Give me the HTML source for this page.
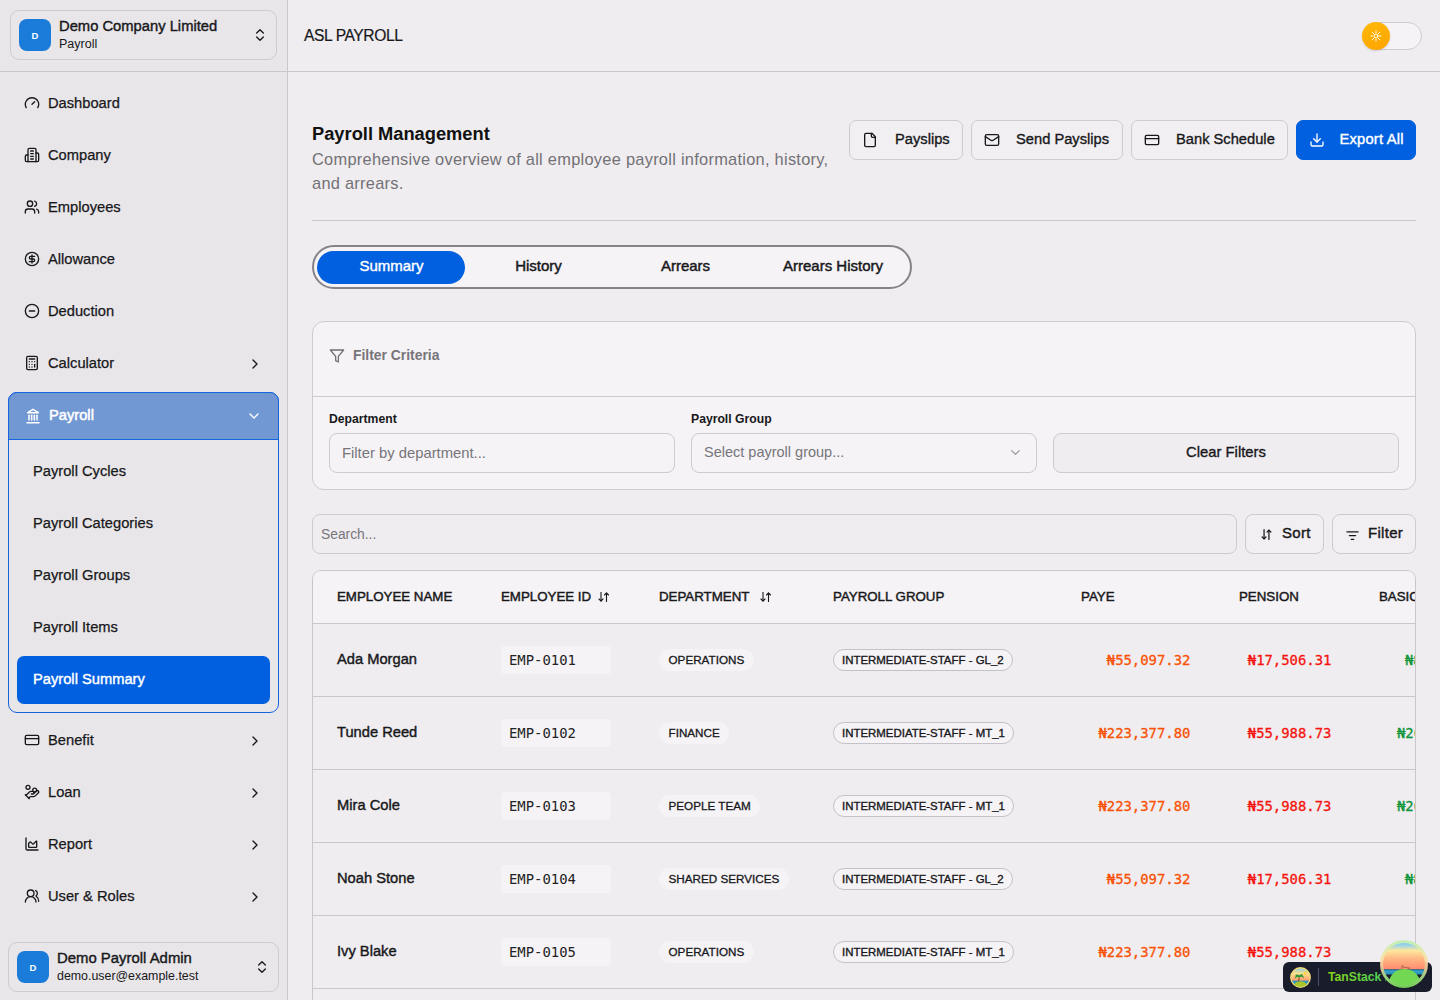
<!DOCTYPE html>
<html lang="en">
<head>
<meta charset="utf-8">
<title>ASL Payroll - Payroll Management</title>
<style>
*{box-sizing:border-box;margin:0;padding:0}
html,body{width:1440px;height:1000px;overflow:hidden}
body{font-family:"Liberation Sans",sans-serif;background:#efedf0;color:#18181b;position:relative;-webkit-font-smoothing:antialiased}
.abs{position:absolute}
svg{display:block}
.ico{position:absolute;fill:none;stroke:currentColor;stroke-width:2;stroke-linecap:round;stroke-linejoin:round}
/* sidebar */
#sidebar{position:absolute;left:0;top:0;width:288px;height:1000px;background:#e8e6e9;border-right:1px solid #c9c7cb}
#sbhead{position:absolute;left:0;top:0;width:287px;height:72px;border-bottom:1px solid #c9c7cb}
.switch{position:absolute;border:1px solid #cdcbcf;border-radius:9px;background:#e8e6e9}
.avatar{position:absolute;width:32px;height:32px;border-radius:8px;background:#1a7bd8;color:#fff;font-weight:700;font-size:9.5px;text-align:center;line-height:33px}
.nav{position:absolute;left:48px;font-size:14.7px;line-height:20px;color:#18181b;white-space:nowrap;-webkit-text-stroke:0.25px #18181b}
.sub{position:absolute;left:33px;font-size:14.7px;line-height:20px;color:#18181b;white-space:nowrap;-webkit-text-stroke:0.25px #18181b}
/* main */
#topbar{position:absolute;left:288px;top:0;width:1152px;height:72px;border-bottom:1px solid #c9c7cb}
.btn{position:absolute;top:120px;height:40px;border:1px solid #cdcbcf;border-radius:7px;background:#f1eff2;font-size:14.7px;line-height:36px;white-space:nowrap;color:#18181b;-webkit-text-stroke:0.35px #18181b}
.btn span{position:absolute;top:0}
.field{position:absolute;border:1px solid #cdcbcf;border-radius:8px;background:#f5f3f6;font-size:14.5px;color:#77757a;white-space:nowrap}
.tab{font-size:15px;line-height:20px;text-align:center;white-space:nowrap;-webkit-text-stroke:0.45px #18181b}
.lbl{font-size:12.2px;line-height:16px;font-weight:700;white-space:nowrap;color:#18181b}
.th{position:absolute;top:0;height:52px;line-height:51px;font-size:13.3px;color:#18181b;white-space:nowrap;-webkit-text-stroke:0.45px #18181b}
.row{position:absolute;left:0;width:1200px;height:73px;border-top:1px solid #c9c7cb}
.row>*{position:absolute;white-space:nowrap}
.name{left:24px;top:25px;font-size:14.7px;line-height:20px;-webkit-text-stroke:0.4px #18181b}
.eid{left:188px;top:22px;width:110px;height:28px;border-radius:4px;background:#f5f3f6;font-family:"DejaVu Sans Mono","Liberation Mono",monospace;font-size:13.9px;line-height:28px;padding-left:8px;color:#222}
.dept{left:346px;top:25px;height:22px;border-radius:11px;background:#f5f3f6;font-size:11.7px;line-height:22px;padding:0 9.5px;-webkit-text-stroke:0.3px #18181b}
.grp{left:520px;top:25px;height:22px;border-radius:11px;border:1px solid #c4c2c6;background:#f5f3f6;font-size:11.45px;line-height:20px;padding:0 8px;-webkit-text-stroke:0.35px #18181b}
.mono{font-family:"DejaVu Sans Mono","Liberation Mono",monospace;font-size:13.9px;line-height:20px;top:26px;text-align:right;-webkit-text-stroke:0.3px currentColor}
.paye{right:322.600px;color:#f95206}
.pen{right:181.600px;color:#f5140f}
.bas{color:#10963c}
</style>
</head>
<body>
<!-- SIDEBAR -->
<div id="sidebar">
  <div id="sbhead">
    <div class="switch" style="left:10px;top:10px;width:267px;height:50px"></div>
    <div class="avatar" style="left:19px;top:19px">D</div>
    <div class="abs" style="left:59px;top:17px;font-size:14.75px;line-height:18px;font-weight:400;white-space:nowrap;-webkit-text-stroke:0.4px #18181b">Demo Company Limited</div>
    <div class="abs" style="left:59px;top:36px;font-size:12.5px;line-height:16px;white-space:nowrap">Payroll</div>
    <svg class="ico" style="left:252px;top:27px" width="16" height="16" viewBox="0 0 24 24"><path d="m7 15 5 5 5-5"/><path d="m7 9 5-5 5 5"/></svg>
  </div>


  <!-- nav icons + labels -->
  <svg class="ico" style="left:24px;top:95px" width="16" height="16" viewBox="0 0 24 24"><path d="M3.3 19a10 10 0 1 1 17.4 0"/><path d="m12 14 4-4"/></svg>
  <div class="nav" style="top:93px">Dashboard</div>

  <svg class="ico" style="left:24px;top:147px" width="16" height="16" viewBox="0 0 24 24"><path d="M6 22V4a2 2 0 0 1 2-2h8a2 2 0 0 1 2 2v18Z"/><path d="M6 12H4a2 2 0 0 0-2 2v6a2 2 0 0 0 2 2h2"/><path d="M18 9h2a2 2 0 0 1 2 2v9a2 2 0 0 1-2 2h-2"/><path d="M10 6h4"/><path d="M10 10h4"/><path d="M10 14h4"/><path d="M10 18h4"/></svg>
  <div class="nav" style="top:145px">Company</div>

  <svg class="ico" style="left:24px;top:199px" width="16" height="16" viewBox="0 0 24 24"><path d="M16 21v-2a4 4 0 0 0-4-4H6a4 4 0 0 0-4 4v2"/><circle cx="9" cy="7" r="4"/><path d="M22 21v-2a4 4 0 0 0-3-3.87"/><path d="M16 3.13a4 4 0 0 1 0 7.75"/></svg>
  <div class="nav" style="top:197px">Employees</div>

  <svg class="ico" style="left:24px;top:251px" width="16" height="16" viewBox="0 0 24 24"><circle cx="12" cy="12" r="10"/><path d="M16 8h-6a2 2 0 1 0 0 4h4a2 2 0 1 1 0 4H8"/><path d="M12 18V6"/></svg>
  <div class="nav" style="top:249px">Allowance</div>

  <svg class="ico" style="left:24px;top:303px" width="16" height="16" viewBox="0 0 24 24"><circle cx="12" cy="12" r="10"/><path d="M8 12h8"/></svg>
  <div class="nav" style="top:301px">Deduction</div>

  <svg class="ico" style="left:24px;top:355px" width="16" height="16" viewBox="0 0 24 24"><rect width="16" height="20" x="4" y="2" rx="2"/><path d="M8 6h8"/><path d="M16 14v4"/><path d="M16 10h.01"/><path d="M12 10h.01"/><path d="M8 10h.01"/><path d="M12 14h.01"/><path d="M8 14h.01"/><path d="M12 18h.01"/><path d="M8 18h.01"/></svg>
  <div class="nav" style="top:353px">Calculator</div>
  <svg class="ico" style="left:247px;top:356px" width="16" height="16" viewBox="0 0 24 24"><path d="m9 18 6-6-6-6"/></svg>

  <!-- Payroll group -->
  <div class="abs" style="left:8px;top:392px;width:271px;height:321px;border:1px solid #1463df;border-radius:9px"></div>
  <div class="abs" style="left:8px;top:392px;width:271px;height:48px;border:1px solid #1463df;border-radius:9px 9px 0 0;background:#7298d4"></div>
  <svg class="ico" style="left:25px;top:408px;color:#fff;stroke-width:2.300" width="16" height="16" viewBox="0 0 24 24"><path d="M3 22h18"/><path d="M6 18v-7"/><path d="M10 18v-7"/><path d="M14 18v-7"/><path d="M18 18v-7"/><path d="m12 2 8 5H4z"/></svg>
  <div class="nav" style="left:49px;top:405px;color:#fff;-webkit-text-stroke:0.5px #fff">Payroll</div>
  <svg class="ico" style="left:246px;top:408px;color:#fff" width="16" height="16" viewBox="0 0 24 24"><path d="m6 9 6 6 6-6"/></svg>

  <div class="sub" style="top:461px">Payroll Cycles</div>
  <div class="sub" style="top:513px">Payroll Categories</div>
  <div class="sub" style="top:565px">Payroll Groups</div>
  <div class="sub" style="top:617px">Payroll Items</div>
  <div class="abs" style="left:17px;top:656px;width:253px;height:48px;border-radius:7px;background:#0060df"></div>
  <div class="sub" style="top:669px;color:#fff;-webkit-text-stroke:0.4px #fff">Payroll Summary</div>

  <svg class="ico" style="left:24px;top:732px" width="16" height="16" viewBox="0 0 24 24"><rect width="20" height="14" x="2" y="5" rx="2"/><path d="M2 10h20"/></svg>
  <div class="nav" style="top:730px">Benefit</div>
  <svg class="ico" style="left:247px;top:733px" width="16" height="16" viewBox="0 0 24 24"><path d="m9 18 6-6-6-6"/></svg>

  <svg class="ico" style="left:24px;top:784px" width="16" height="16" viewBox="0 0 24 24"><path d="M11 15h2a2 2 0 1 0 0-4h-3c-.6 0-1.100.2-1.400.6L3 17"/><path d="m7 21 1.600-1.400c.3-.4.800-.6 1.400-.6h4c1.100 0 2.100-.4 2.800-1.200l4.600-4.400a2 2 0 0 0-2.750-2.910l-4.200 3.900"/><path d="m2 16 6 6"/><circle cx="16" cy="9" r="2.900"/><circle cx="6" cy="5" r="3"/></svg>
  <div class="nav" style="top:782px">Loan</div>
  <svg class="ico" style="left:247px;top:785px" width="16" height="16" viewBox="0 0 24 24"><path d="m9 18 6-6-6-6"/></svg>

  <svg class="ico" style="left:24px;top:836px" width="16" height="16" viewBox="0 0 24 24"><path d="M3 3v16a2 2 0 0 0 2 2h16"/><path d="M7 11.207a.5.500 0 0 1 .146-.353l2-2a.5.500 0 0 1 .708 0l3.292 3.292a.5.500 0 0 0 .708 0l4.292-4.292a.5.500 0 0 1 .854.353V16a1 1 0 0 1-1 1H8a1 1 0 0 1-1-1z"/></svg>
  <div class="nav" style="top:834px">Report</div>
  <svg class="ico" style="left:247px;top:837px" width="16" height="16" viewBox="0 0 24 24"><path d="m9 18 6-6-6-6"/></svg>

  <svg class="ico" style="left:24px;top:888px" width="16" height="16" viewBox="0 0 24 24"><path d="M18 21a8 8 0 0 0-16 0"/><circle cx="10" cy="8" r="5"/><path d="M22 20c0-3.370-2-6.500-4-8a5 5 0 0 0-.45-8.300"/></svg>
  <div class="nav" style="top:886px">User &amp; Roles</div>
  <svg class="ico" style="left:247px;top:889px" width="16" height="16" viewBox="0 0 24 24"><path d="m9 18 6-6-6-6"/></svg>

  <!-- user box -->
  <div class="switch" style="left:8px;top:942px;width:271px;height:50px"></div>
  <div class="avatar" style="left:17px;top:951px">D</div>
  <div class="abs" style="left:57px;top:949px;font-size:14.9px;line-height:18px;white-space:nowrap;-webkit-text-stroke:0.4px #18181b">Demo Payroll Admin</div>
  <div class="abs" style="left:57px;top:968px;font-size:12.4px;line-height:16px;white-space:nowrap">demo.user@example.test</div>
  <svg class="ico" style="left:254px;top:959px" width="16" height="16" viewBox="0 0 24 24"><path d="m7 15 5 5 5-5"/><path d="m7 9 5-5 5 5"/></svg>
</div>

<!-- TOP BAR -->
<div id="topbar">
  <div class="abs" style="left:16px;top:26px;font-size:15.600px;letter-spacing:-0.4px;line-height:20px;white-space:nowrap;-webkit-text-stroke:0.2px #18181b">ASL PAYROLL</div>
</div>


<!-- theme toggle -->
<div class="abs" style="left:1364px;top:22px;width:58px;height:28px;border:1px solid #cfcdd1;border-radius:14px;background:#f5f3f6"></div>
<div class="abs" style="left:1362px;top:22px;width:28px;height:28px;border-radius:14px;background:linear-gradient(160deg,#ffba08,#ffa200);box-shadow:0 1px 2px rgba(0,0,0,.15)"></div>
<svg class="ico" style="left:1370px;top:30px;color:#fff;stroke-width:2" width="12" height="12" viewBox="0 0 24 24"><circle cx="12" cy="12" r="4"/><path d="M12 2v3"/><path d="M12 19v3"/><path d="m4.930 4.930 2.100 2.100"/><path d="m16.970 16.970 2.100 2.100"/><path d="M2 12h3"/><path d="M19 12h3"/><path d="m7.030 16.970-2.100 2.100"/><path d="m19.070 4.930-2.100 2.100"/></svg>

<!-- page heading -->
<div class="abs" style="left:312px;top:122px;font-size:18.3px;line-height:24px;font-weight:700;white-space:nowrap;color:#111">Payroll Management</div>
<div class="abs" style="left:312px;top:147px;width:560px;font-size:16.4px;letter-spacing:0.27px;line-height:24px;color:#737176">Comprehensive overview of all employee payroll information, history,<br>and arrears.</div>

<div class="btn" style="left:849px;width:114px"><svg class="ico" style="left:12px;top:10.500px;stroke-width:2" width="16" height="16" viewBox="0 0 24 24"><path d="M15 2H6a2 2 0 0 0-2 2v16a2 2 0 0 0 2 2h12a2 2 0 0 0 2-2V7Z"/><path d="M14 2v4a2 2 0 0 0 2 2h4"/></svg><span style="left:45px">Payslips</span></div>
<div class="btn" style="left:971px;width:152px"><svg class="ico" style="left:12px;top:10.500px;stroke-width:2" width="16" height="16" viewBox="0 0 24 24"><rect width="20" height="16" x="2" y="4" rx="2"/><path d="m22 7-8.970 5.700a1.940 1.940 0 0 1-2.060 0L2 7"/></svg><span style="left:44px">Send Payslips</span></div>
<div class="btn" style="left:1131px;width:157px"><svg class="ico" style="left:12px;top:10.500px;stroke-width:2" width="16" height="16" viewBox="0 0 24 24"><rect width="20" height="14" x="2" y="5" rx="2"/><path d="M2 10h20"/></svg><span style="left:44px">Bank Schedule</span></div>
<div class="btn" style="left:1296px;width:120px;background:#0060df;border-color:#0060df;color:#fff;-webkit-text-stroke:0.4px #fff"><svg class="ico" style="left:12px;top:10.500px;stroke-width:2" width="16" height="16" viewBox="0 0 24 24"><path d="M21 15v4a2 2 0 0 1-2 2H5a2 2 0 0 1-2-2v-4"/><path d="m7 10 5 5 5-5"/><path d="M12 15V3"/></svg><span style="left:42.500px;letter-spacing:0.22px">Export All</span></div>

<div class="abs" style="left:312px;top:220px;width:1104px;height:1px;background:#c9c7cb"></div>

<!-- tabs -->
<div class="abs" style="left:312px;top:245px;width:600px;height:44px;border:2px solid #858389;border-radius:23px;background:#f5f3f6"></div>
<div class="abs" style="left:317px;top:251px;width:148px;height:33px;border-radius:17px;background:#0060df"></div>
<div class="abs tab" style="left:318px;top:256px;width:147px;color:#fff;-webkit-text-stroke:0.4px #fff">Summary</div>
<div class="abs tab" style="left:465px;top:256px;width:147px">History</div>
<div class="abs tab" style="left:612px;top:256px;width:147px">Arrears</div>
<div class="abs tab" style="left:759px;top:256px;width:148px">Arrears History</div>

<!-- filter card -->
<div class="abs" style="left:312px;top:321px;width:1104px;height:169px;border:1px solid #cdcbcf;border-radius:12px;background:#f5f3f6"></div>
<div class="abs" style="left:313px;top:396px;width:1102px;height:1px;background:#cdcbcf"></div>
<svg class="ico" style="left:329px;top:348px;color:#6f6d72;stroke-width:1.900" width="16" height="16" viewBox="0 0 24 24"><path d="M22 3H2l8 9.460V19l4 2v-8.540z"/></svg>
<div class="abs" style="left:353px;top:346px;font-size:13.900px;line-height:18px;font-weight:700;color:#77757a;white-space:nowrap">Filter Criteria</div>
<div class="abs lbl" style="left:329px;top:411px">Department</div>
<div class="abs lbl" style="left:691px;top:411px">Payroll Group</div>
<div class="field" style="left:329px;top:433px;width:346px;height:40px;line-height:38px;padding-left:12px;font-size:14.800px">Filter by department...</div>
<div class="field" style="left:691px;top:433px;width:346px;height:40px;line-height:36px;padding-left:12px">Select payroll group...</div>
<svg class="ico" style="left:1008px;top:445px;color:#9a989d;stroke-width:2" width="15" height="15" viewBox="0 0 24 24"><path d="m6 9 6 6 6-6"/></svg>
<div class="field" style="left:1053px;top:433px;width:346px;height:40px;line-height:36px;text-align:center;font-size:14.800px;background:#efedf0;color:#18181b;-webkit-text-stroke:0.35px #18181b">Clear Filters</div>

<!-- search row -->
<div class="field" style="left:312px;top:514px;width:925px;height:40px;line-height:40px;padding-left:8px;font-size:13.800px;background:#efedf0">Search...</div>
<div class="field" style="left:1245px;top:514px;width:79px;height:40px;line-height:35px;font-size:15px;letter-spacing:0.3px;background:#f1eff2;color:#18181b;-webkit-text-stroke:0.4px #18181b"><svg class="ico" style="left:13.500px;top:13px;stroke-width:2.300" width="13" height="13" viewBox="0 0 24 24"><path d="M7.500 3v17"/><path d="m4 16.500 3.500 3.500 3.500-3.500"/><path d="M16.500 21V4"/><path d="m13 7.500 3.500-3.500 3.500 3.500"/></svg><span class="abs" style="left:36px;top:0">Sort</span></div>
<div class="field" style="left:1332px;top:514px;width:84px;height:40px;line-height:35px;font-size:15px;letter-spacing:0.3px;background:#f1eff2;color:#18181b;-webkit-text-stroke:0.4px #18181b"><svg class="ico" style="left:12px;top:12.500px;stroke-width:2" width="15" height="15" viewBox="0 0 24 24"><path d="M3 6h18"/><path d="M7 12h10"/><path d="M10 18h4"/></svg><span class="abs" style="left:35px;top:0">Filter</span></div>

<!-- table -->
<div class="abs" style="left:312px;top:570px;width:1104px;height:440px;border:1px solid #c9c7cb;border-radius:9px 9px 0 0;overflow:hidden;background:#efedf0">
  <div class="abs" style="left:0;top:0;width:1200px;height:52px;background:#f5f3f6">
    <div class="th" style="left:24px">EMPLOYEE NAME</div>
    <div class="th" style="left:188px">EMPLOYEE ID</div>
    <svg class="ico" style="left:285px;top:20px;stroke-width:2.200" width="12" height="12" viewBox="0 0 24 24"><path d="M6 3v17"/><path d="m2 16 4 4 4-4"/><path d="M17 21V4"/><path d="m13 8 4-4 4 4"/></svg>
    <div class="th" style="left:346px">DEPARTMENT</div>
    <svg class="ico" style="left:447px;top:20px;stroke-width:2.200" width="12" height="12" viewBox="0 0 24 24"><path d="M6 3v17"/><path d="m2 16 4 4 4-4"/><path d="M17 21V4"/><path d="m13 8 4-4 4 4"/></svg>
    <div class="th" style="left:520px">PAYROLL GROUP</div>
    <div class="th" style="left:768px">PAYE</div>
    <div class="th" style="left:926px">PENSION</div>
    <div class="th" style="left:1066px">BASIC</div>
  </div>
    <div class="row" style="top:52px"><div class="name">Ada Morgan</div><div class="eid">EMP-0101</div><div class="dept">OPERATIONS</div><div class="grp">INTERMEDIATE-STAFF - GL_2</div><div class="mono paye">₦55,097.32</div><div class="mono pen">₦17,506.31</div><div class="mono bas" style="left:1092px">₦87,531.55</div></div>
    <div class="row" style="top:125px"><div class="name">Tunde Reed</div><div class="eid">EMP-0102</div><div class="dept">FINANCE</div><div class="grp">INTERMEDIATE-STAFF - MT_1</div><div class="mono paye">₦223,377.80</div><div class="mono pen">₦55,988.73</div><div class="mono bas" style="left:1084px">₦260,450.00</div></div>
    <div class="row" style="top:198px"><div class="name">Mira Cole</div><div class="eid">EMP-0103</div><div class="dept">PEOPLE TEAM</div><div class="grp">INTERMEDIATE-STAFF - MT_1</div><div class="mono paye">₦223,377.80</div><div class="mono pen">₦55,988.73</div><div class="mono bas" style="left:1084px">₦260,450.00</div></div>
    <div class="row" style="top:271px"><div class="name">Noah Stone</div><div class="eid">EMP-0104</div><div class="dept">SHARED SERVICES</div><div class="grp">INTERMEDIATE-STAFF - GL_2</div><div class="mono paye">₦55,097.32</div><div class="mono pen">₦17,506.31</div><div class="mono bas" style="left:1092px">₦87,531.55</div></div>
    <div class="row" style="top:344px"><div class="name">Ivy Blake</div><div class="eid">EMP-0105</div><div class="dept">OPERATIONS</div><div class="grp">INTERMEDIATE-STAFF - MT_1</div><div class="mono paye">₦223,377.80</div><div class="mono pen">₦55,988.73</div><div class="mono bas" style="left:1084px">₦260,450.00</div></div>
    <div class="row" style="top:417px"><div class="name">Sam Okoro</div><div class="eid">EMP-0106</div><div class="dept">FINANCE</div><div class="grp">INTERMEDIATE-STAFF - GL_2</div><div class="mono paye">₦55,097.32</div><div class="mono pen">₦17,506.31</div><div class="mono bas" style="left:1092px">₦87,531.55</div></div>
</div>

<!-- TanStack devtools badge -->
<div class="abs" style="left:1283px;top:962px;width:149px;height:30px;border-radius:6px;background:#191c2b"></div>
<svg class="abs" style="left:1290px;top:967px" width="21" height="21" viewBox="0 0 21 21">
  <defs>
    <linearGradient id="sk1" x1="0" y1="0" x2="0" y2="1"><stop offset="0" stop-color="#7fc8ea"/><stop offset=".3" stop-color="#ffe08a"/><stop offset=".62" stop-color="#ff9f72"/><stop offset=".7" stop-color="#2b93bd"/><stop offset="1" stop-color="#2b93bd"/></linearGradient>
    <clipPath id="c1"><circle cx="10.500" cy="10.500" r="9.500"/></clipPath>
  </defs>
  <circle cx="10.500" cy="10.500" r="9.700" fill="url(#sk1)" stroke="#f1dc7c" stroke-width="1.400"/>
  <g clip-path="url(#c1)">
    <ellipse cx="10.500" cy="17.800" rx="6" ry="3.600" fill="#a8c62c"/>
    <path d="M8.600 14.500 9.300 9.800" stroke="#7a4a1c" stroke-width="1" fill="none"/>
    <path d="M9.300 9.800c-1.800-1-3.200-.4-3.800.8M9.300 9.800c1.600-1.300 3.200-.8 3.900.4M9.300 9.800c-.8-1.700-2.300-2-3.300-1.500M9.300 9.800c.6-1.700 2-2.200 3.100-1.800" stroke="#2f9a3c" stroke-width="1.300" fill="none" stroke-linecap="round"/>
    <circle cx="15.200" cy="6.200" r="1.500" fill="#ffd23a"/>
  </g>
</svg>
<div class="abs" style="left:1318px;top:968px;width:1px;height:18px;background:#4a5068"></div>
<svg class="abs" style="left:1326px;top:967px" width="60" height="20" viewBox="0 0 60 20"><defs><linearGradient id="tg" x1="0" y1="0" x2="1" y2="0"><stop offset="0" stop-color="#8bd516"/><stop offset="1" stop-color="#3fd065"/></linearGradient></defs><text x="2" y="14.400" font-family="Liberation Sans, sans-serif" font-size="12.200" font-weight="700" fill="url(#tg)">TanStack R</text></svg>
<svg class="abs" style="left:1380px;top:940px" width="48" height="48" viewBox="0 0 48 48">
  <defs>
    <linearGradient id="sk2" x1="0" y1="0" x2="0" y2="1"><stop offset="0" stop-color="#6fc0f2"/><stop offset=".18" stop-color="#9ad4e8"/><stop offset=".36" stop-color="#ffe79c"/><stop offset=".62" stop-color="#ffb986"/><stop offset="1" stop-color="#ff8a6e"/></linearGradient>
    <linearGradient id="rg" x1="0" y1="0" x2="0" y2="1"><stop offset="0" stop-color="#bfeeb4"/><stop offset=".3" stop-color="#f2e7a4"/><stop offset=".55" stop-color="#ffd0a0"/><stop offset=".78" stop-color="#a9dc88"/><stop offset="1" stop-color="#7ddc5a"/></linearGradient>
    <clipPath id="c2"><circle cx="24" cy="24" r="21.500"/></clipPath>
  </defs>
  <g clip-path="url(#c2)">
    <rect x="0" y="0" width="48" height="29.500" fill="url(#sk2)"/>
    <rect x="0" y="29.500" width="48" height="5" fill="#1f86b4"/>
    <rect x="0" y="30.800" width="48" height=".8" fill="#49b3d6"/>
    <rect x="0" y="32.600" width="48" height=".8" fill="#49b3d6"/>
    <path d="M21.500 30 22.300 25.200M29.500 29.500 29.200 27.400M22.500 26.800 29.200 28.200" stroke="#8a5a3a" stroke-width=".8" fill="none"/>
    <ellipse cx="24.500" cy="41.500" rx="15" ry="12.500" fill="#72d752"/>
  </g>
  <circle cx="24" cy="24" r="22.500" fill="none" stroke="url(#rg)" stroke-width="3" opacity=".92"/>
</svg>
</body>
</html>
